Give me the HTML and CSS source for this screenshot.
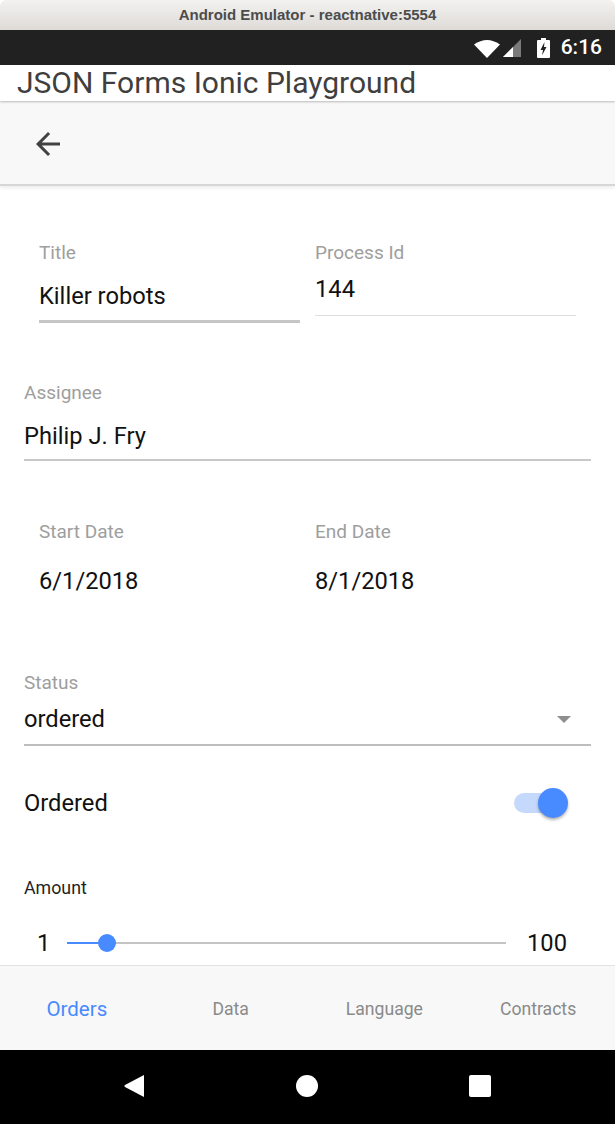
FILE: index.html
```html
<!DOCTYPE html>
<html>
<head>
<meta charset="utf-8">
<link rel="stylesheet" href="styles.css">
</head>
<body>
<div class="screen">
  <div class="win-title">Android Emulator - reactnative:5554</div>
  <div class="statusbar">
    <svg class="sb-wifi" width="26" height="19" viewBox="0 0 26 19"><path d="M0 5.5 Q13 -3.5 26 5.5 L13 19 Z" fill="#fff"/></svg>
    <svg class="sb-signal" width="18" height="18" viewBox="0 0 18 18"><polygon points="0,18 18,0 18,18" fill="#7a7a7a"/><polygon points="0,18 10,8 10,18" fill="#fff"/></svg>
    <svg class="sb-batt" width="13" height="20" viewBox="0 0 13 20"><rect x="4" y="0" width="5" height="2" fill="#fff"/><rect x="0" y="2" width="13" height="18" rx="1" fill="#fff"/><path d="M7.5 4 L3.5 12 H6 L5 17.5 L9.5 9 H7 Z" fill="#212121"/></svg>
    <span class="sb-time">6:16</span>
  </div>
  <div class="apphead">JSON Forms Ionic Playground</div>
  <div class="toolbar">
    <svg class="back" width="36" height="36" viewBox="0 0 24 24"><path d="M20 11H7.830l5.59-5.590L12 4l-8 8 8 8 1.41-1.41L7.83 13H20v-2z" fill="#424242"/></svg>
  </div>
  <div class="content">
    <div class="row row1">
      <div class="col col-left">
        <div class="label">Title</div>
        <div class="field field-title"><div class="value">Killer robots</div></div>
      </div>
      <div class="col col-right">
        <div class="label">Process Id</div>
        <div class="field field-pid"><div class="value">144</div></div>
      </div>
    </div>
    <div class="block assignee">
      <div class="label">Assignee</div>
      <div class="field field-assignee"><div class="value">Philip J. Fry</div></div>
    </div>
    <div class="row row-dates">
      <div class="col col-left">
        <div class="label">Start Date</div>
        <div class="value date">6/1/2018</div>
      </div>
      <div class="col col-right">
        <div class="label">End Date</div>
        <div class="value date">8/1/2018</div>
      </div>
    </div>
    <div class="block status">
      <div class="label">Status</div>
      <div class="field field-status">
        <div class="value">ordered</div>
        <span class="caret"></span>
      </div>
    </div>
    <div class="toggle-row">
      <div class="value">Ordered</div>
      <div class="toggle"><span class="knob"></span></div>
    </div>
    <div class="amount-label">Amount</div>
    <div class="slider-row">
      <span class="slider-min">1</span>
      <div class="slider">
        <div class="slider-fill"></div>
        <span class="slider-knob"></span>
      </div>
      <span class="slider-max">100</span>
    </div>
  </div>
  <div class="tabbar">
    <div class="tab active">Orders</div>
    <div class="tab">Data</div>
    <div class="tab">Language</div>
    <div class="tab">Contracts</div>
  </div>
  <div class="navbar">
    <svg width="24" height="26" viewBox="0 0 24 26"><path d="M21 2.5 Q22 1.5 22 3 V23 Q22 24.5 21 23.5 L3 14 Q1.5 13 3 12 Z" fill="#fff"/></svg>
    <svg width="24" height="24" viewBox="0 0 24 24"><circle cx="12" cy="12" r="11" fill="#fff"/></svg>
    <svg width="24" height="24" viewBox="0 0 24 24"><rect x="1" y="1" width="22" height="22" rx="2" fill="#fff"/></svg>
  </div>
</div>
</body>
</html>
```
FILE: styles.css
```css
* { box-sizing: border-box; }
html, body { margin: 0; padding: 0; background: #fff; }
body { font-family: Roboto, "Noto Sans", sans-serif; }
.screen { width: 615px; height: 1124px; display: flex; flex-direction: column; overflow: hidden; }

.win-title {
  height: 30px; flex: none;
  background: linear-gradient(#f3f2f0, #dedbd7);
  border-radius: 6px 6px 0 0;
  font-family: "Liberation Sans", Arial, sans-serif; font-weight: bold; font-size: 15px;
  color: #4c4c4c; text-align: center; line-height: 30px;
}
.statusbar {
  height: 35px; flex: none; background: #212121;
  display: flex; align-items: center; justify-content: flex-end;
  padding-right: 13px;
}
.sb-wifi { margin-right: 3px; margin-top: 1px; }
.sb-signal { margin-right: 16px; }
.sb-batt { margin-right: 11px; }
.sb-time { color: #fff; font-size: 21px; font-weight: 500; line-height: 35px; }

.apphead {
  height: 36px; flex: none; background: #fff;
  font-size: 30px; color: #3f3f3f; padding-left: 17px; line-height: 36px;
  box-shadow: 0 1px 2px rgba(0,0,0,0.25);
  position: relative; z-index: 2;
}
.toolbar {
  height: 85px; flex: none; background: #f8f8f8;
  display: flex; align-items: center; padding-left: 30px;
  border-bottom: 2px solid #d6d6d6;
  box-shadow: 0 2px 4px rgba(0,0,0,0.08);
  position: relative; z-index: 1;
}
.back { margin-top: 2px; }

.content { flex: 1; padding: 0 24px; overflow: hidden; }
.row { display: flex; }
.col { flex: 1; }
.col-left { padding: 0 8px 0 15px; }
.col-right { padding: 0 15px 0 7px; }

.label { font-size: 19px; line-height: 20px; color: #9e9e9e; padding-top: 1px; }
.value { font-size: 23.7px; line-height: 26px; color: #111; }

.row1 { margin-top: 56px; }
.field-title { margin-top: 20px; padding-bottom: 11px; border-bottom: 3px solid #c6c6c6; }
.field-pid { margin-top: 13px; padding-bottom: 13px; border-bottom: 1px solid #dedede; }

.assignee { margin-top: 59px; }
.field-assignee { margin-top: 20px; padding-bottom: 10px; border-bottom: 2px solid #c8c8c8; }

.row-dates { margin-top: 60px; }
.date { margin-top: 26px; }

.status { margin-top: 78px; }
.field-status {
  margin-top: 13px; padding-bottom: 12px; border-bottom: 2px solid #bdbdbd;
  display: flex; align-items: center; justify-content: space-between;
}
.caret {
  width: 0; height: 0; margin-right: 20px;
  border-left: 7px solid transparent; border-right: 7px solid transparent;
  border-top: 7px solid #8e8e8e;
}

.toggle-row { margin-top: 44px; display: flex; align-items: center; justify-content: space-between; }
.toggle {
  width: 48px; height: 20px; border-radius: 10px; background: #c5d9fd;
  margin-right: 29px; position: relative;
}
.knob {
  position: absolute; right: -6px; top: -5px; width: 30px; height: 30px; border-radius: 50%;
  background: #488aff; box-shadow: 0 2px 3px rgba(0,0,0,0.3);
}

.amount-label { margin-top: 62px; font-size: 17.8px; line-height: 20px; color: #1f1f1f; }

.slider-row { margin-top: 32px; height: 26px; display: flex; align-items: center; padding: 0 24px 0 13px; }
.slider-min, .slider-max { font-size: 23.7px; line-height: 26px; color: #111; }
.slider { flex: 1; height: 2px; background: #c4c4c4; margin: 0 21px 0 17px; position: relative; }
.slider-fill { width: 40px; height: 2px; background: #488aff; }
.slider-knob {
  position: absolute; left: 31px; top: -8px; width: 18px; height: 18px; border-radius: 50%; background: #488aff;
}

.tabbar {
  height: 85px; flex: none; background: #f8f8f8; border-top: 1px solid #e2e2e2;
  display: flex; align-items: center;
}
.tab { flex: 1; text-align: center; font-size: 17.6px; color: #8a8a8a; padding-top: 2px; }
.tab.active { color: #488aff; font-size: 20.5px; }

.navbar {
  height: 74px; flex: none; background: #000;
  display: flex; align-items: center; justify-content: space-between;
  padding: 0 123px 2px 122px;
}
```
